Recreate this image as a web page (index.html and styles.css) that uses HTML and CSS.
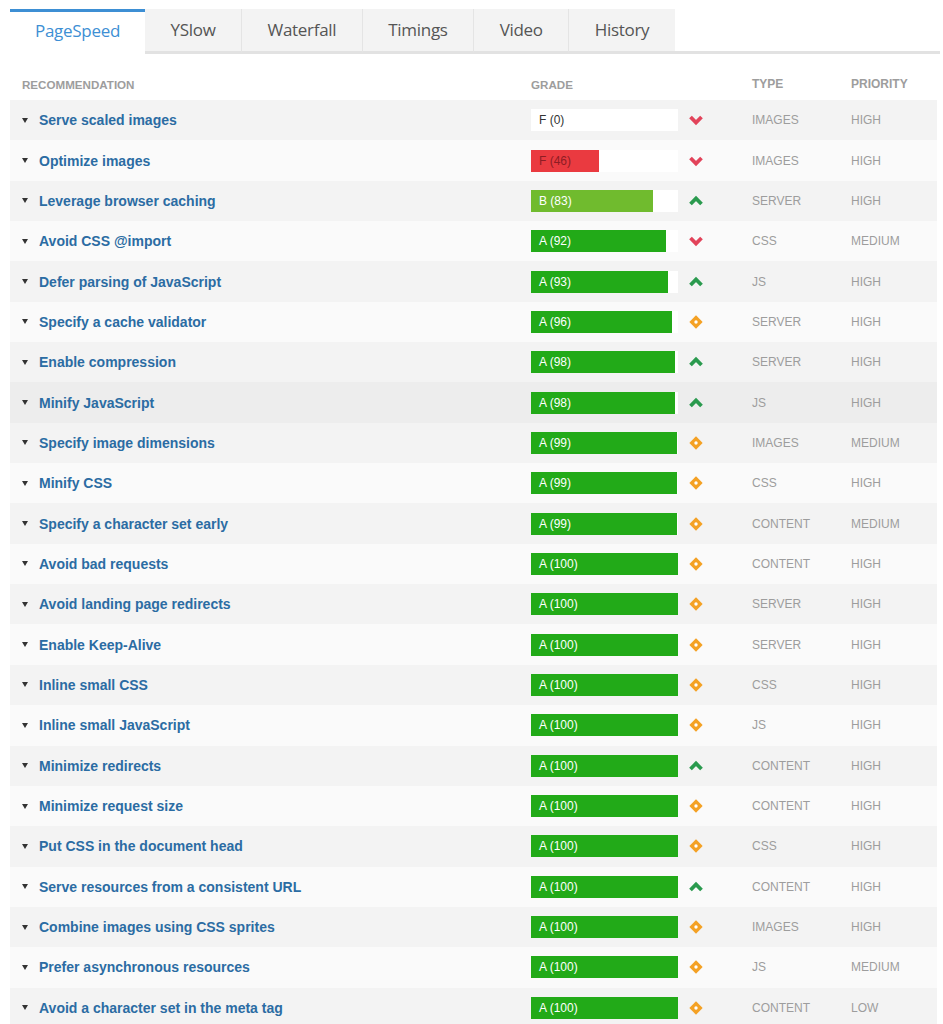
FILE: index.html
```html
<!DOCTYPE html>
<html lang="en">
  <head>
    <meta charset="UTF-8" />
    <title>Performance Report - PageSpeed</title>
    <link rel="stylesheet" href="styles.css">
  </head>
  <body>
    <div class="report">
      <ul class="tabs">
        <li class="tab active">PageSpeed</li>
        <li class="tab">YSlow</li>
        <li class="tab">Waterfall</li>
        <li class="tab">Timings</li>
        <li class="tab">Video</li>
        <li class="tab">History</li>
        <li class="tab-fill"></li>
      </ul>

      <div class="grid">
        <div class="row head">
          <div class="col-rec">Recommendation</div>
          <div class="col-grade">Grade</div>
          <div class="col-trend"></div>
          <div class="col-type">Type</div>
          <div class="col-prio">Priority</div>
        </div>

        <div class="row">
          <div class="col-rec"><span class="caret"></span><a href="#">Serve scaled images</a></div>
          <div class="col-grade"><div class="bar"><div class="fill fill-f" style="width: 0%"></div><span class="label dark">F (0)</span></div></div>
          <div class="col-trend"><svg class="ico" viewBox="0 0 16 14"><polyline class="down" points="2.5,4 8,9.5 13.5,4"/></svg></div>
          <div class="col-type">Images</div>
          <div class="col-prio">High</div>
        </div>
        <div class="row">
          <div class="col-rec"><span class="caret"></span><a href="#">Optimize images</a></div>
          <div class="col-grade"><div class="bar"><div class="fill fill-f" style="width: 46%"></div><span class="label red">F (46)</span></div></div>
          <div class="col-trend"><svg class="ico" viewBox="0 0 16 14"><polyline class="down" points="2.5,4 8,9.5 13.5,4"/></svg></div>
          <div class="col-type">Images</div>
          <div class="col-prio">High</div>
        </div>
        <div class="row">
          <div class="col-rec"><span class="caret"></span><a href="#">Leverage browser caching</a></div>
          <div class="col-grade"><div class="bar"><div class="fill fill-b" style="width: 83%"></div><span class="label">B (83)</span></div></div>
          <div class="col-trend"><svg class="ico" viewBox="0 0 16 14"><polyline class="up" points="2.5,10 8,4.5 13.5,10"/></svg></div>
          <div class="col-type">Server</div>
          <div class="col-prio">High</div>
        </div>
        <div class="row">
          <div class="col-rec"><span class="caret"></span><a href="#">Avoid CSS @import</a></div>
          <div class="col-grade"><div class="bar"><div class="fill" style="width: 92%"></div><span class="label">A (92)</span></div></div>
          <div class="col-trend"><svg class="ico" viewBox="0 0 16 14"><polyline class="down" points="2.5,4 8,9.5 13.5,4"/></svg></div>
          <div class="col-type">CSS</div>
          <div class="col-prio">Medium</div>
        </div>
        <div class="row">
          <div class="col-rec"><span class="caret"></span><a href="#">Defer parsing of JavaScript</a></div>
          <div class="col-grade"><div class="bar"><div class="fill" style="width: 93%"></div><span class="label">A (93)</span></div></div>
          <div class="col-trend"><svg class="ico" viewBox="0 0 16 14"><polyline class="up" points="2.5,10 8,4.5 13.5,10"/></svg></div>
          <div class="col-type">JS</div>
          <div class="col-prio">High</div>
        </div>
        <div class="row">
          <div class="col-rec"><span class="caret"></span><a href="#">Specify a cache validator</a></div>
          <div class="col-grade"><div class="bar"><div class="fill" style="width: 96%"></div><span class="label">A (96)</span></div></div>
          <div class="col-trend"><svg class="ico" viewBox="0 0 16 14"><rect class="same" x="3.3" y="2.3" width="9.4" height="9.4" transform="rotate(45 8 7)"/><circle cx="8" cy="7" r="1.7" fill="#fff"/></svg></div>
          <div class="col-type">Server</div>
          <div class="col-prio">High</div>
        </div>
        <div class="row">
          <div class="col-rec"><span class="caret"></span><a href="#">Enable compression</a></div>
          <div class="col-grade"><div class="bar"><div class="fill" style="width: 98%"></div><span class="label">A (98)</span></div></div>
          <div class="col-trend"><svg class="ico" viewBox="0 0 16 14"><polyline class="up" points="2.5,10 8,4.5 13.5,10"/></svg></div>
          <div class="col-type">Server</div>
          <div class="col-prio">High</div>
        </div>
        <div class="row hover">
          <div class="col-rec"><span class="caret"></span><a href="#">Minify JavaScript</a></div>
          <div class="col-grade"><div class="bar"><div class="fill" style="width: 98%"></div><span class="label">A (98)</span></div></div>
          <div class="col-trend"><svg class="ico" viewBox="0 0 16 14"><polyline class="up" points="2.5,10 8,4.5 13.5,10"/></svg></div>
          <div class="col-type">JS</div>
          <div class="col-prio">High</div>
        </div>
        <div class="row">
          <div class="col-rec"><span class="caret"></span><a href="#">Specify image dimensions</a></div>
          <div class="col-grade"><div class="bar"><div class="fill" style="width: 99%"></div><span class="label">A (99)</span></div></div>
          <div class="col-trend"><svg class="ico" viewBox="0 0 16 14"><rect class="same" x="3.3" y="2.3" width="9.4" height="9.4" transform="rotate(45 8 7)"/><circle cx="8" cy="7" r="1.7" fill="#fff"/></svg></div>
          <div class="col-type">Images</div>
          <div class="col-prio">Medium</div>
        </div>
        <div class="row">
          <div class="col-rec"><span class="caret"></span><a href="#">Minify CSS</a></div>
          <div class="col-grade"><div class="bar"><div class="fill" style="width: 99%"></div><span class="label">A (99)</span></div></div>
          <div class="col-trend"><svg class="ico" viewBox="0 0 16 14"><rect class="same" x="3.3" y="2.3" width="9.4" height="9.4" transform="rotate(45 8 7)"/><circle cx="8" cy="7" r="1.7" fill="#fff"/></svg></div>
          <div class="col-type">CSS</div>
          <div class="col-prio">High</div>
        </div>
        <div class="row">
          <div class="col-rec"><span class="caret"></span><a href="#">Specify a character set early</a></div>
          <div class="col-grade"><div class="bar"><div class="fill" style="width: 99%"></div><span class="label">A (99)</span></div></div>
          <div class="col-trend"><svg class="ico" viewBox="0 0 16 14"><rect class="same" x="3.3" y="2.3" width="9.4" height="9.4" transform="rotate(45 8 7)"/><circle cx="8" cy="7" r="1.7" fill="#fff"/></svg></div>
          <div class="col-type">Content</div>
          <div class="col-prio">Medium</div>
        </div>
        <div class="row">
          <div class="col-rec"><span class="caret"></span><a href="#">Avoid bad requests</a></div>
          <div class="col-grade"><div class="bar"><div class="fill" style="width: 100%"></div><span class="label">A (100)</span></div></div>
          <div class="col-trend"><svg class="ico" viewBox="0 0 16 14"><rect class="same" x="3.3" y="2.3" width="9.4" height="9.4" transform="rotate(45 8 7)"/><circle cx="8" cy="7" r="1.7" fill="#fff"/></svg></div>
          <div class="col-type">Content</div>
          <div class="col-prio">High</div>
        </div>
        <div class="row">
          <div class="col-rec"><span class="caret"></span><a href="#">Avoid landing page redirects</a></div>
          <div class="col-grade"><div class="bar"><div class="fill" style="width: 100%"></div><span class="label">A (100)</span></div></div>
          <div class="col-trend"><svg class="ico" viewBox="0 0 16 14"><rect class="same" x="3.3" y="2.3" width="9.4" height="9.4" transform="rotate(45 8 7)"/><circle cx="8" cy="7" r="1.7" fill="#fff"/></svg></div>
          <div class="col-type">Server</div>
          <div class="col-prio">High</div>
        </div>
        <div class="row">
          <div class="col-rec"><span class="caret"></span><a href="#">Enable Keep-Alive</a></div>
          <div class="col-grade"><div class="bar"><div class="fill" style="width: 100%"></div><span class="label">A (100)</span></div></div>
          <div class="col-trend"><svg class="ico" viewBox="0 0 16 14"><rect class="same" x="3.3" y="2.3" width="9.4" height="9.4" transform="rotate(45 8 7)"/><circle cx="8" cy="7" r="1.7" fill="#fff"/></svg></div>
          <div class="col-type">Server</div>
          <div class="col-prio">High</div>
        </div>
        <div class="row">
          <div class="col-rec"><span class="caret"></span><a href="#">Inline small CSS</a></div>
          <div class="col-grade"><div class="bar"><div class="fill" style="width: 100%"></div><span class="label">A (100)</span></div></div>
          <div class="col-trend"><svg class="ico" viewBox="0 0 16 14"><rect class="same" x="3.3" y="2.3" width="9.4" height="9.4" transform="rotate(45 8 7)"/><circle cx="8" cy="7" r="1.7" fill="#fff"/></svg></div>
          <div class="col-type">CSS</div>
          <div class="col-prio">High</div>
        </div>
        <div class="row">
          <div class="col-rec"><span class="caret"></span><a href="#">Inline small JavaScript</a></div>
          <div class="col-grade"><div class="bar"><div class="fill" style="width: 100%"></div><span class="label">A (100)</span></div></div>
          <div class="col-trend"><svg class="ico" viewBox="0 0 16 14"><rect class="same" x="3.3" y="2.3" width="9.4" height="9.4" transform="rotate(45 8 7)"/><circle cx="8" cy="7" r="1.7" fill="#fff"/></svg></div>
          <div class="col-type">JS</div>
          <div class="col-prio">High</div>
        </div>
        <div class="row">
          <div class="col-rec"><span class="caret"></span><a href="#">Minimize redirects</a></div>
          <div class="col-grade"><div class="bar"><div class="fill" style="width: 100%"></div><span class="label">A (100)</span></div></div>
          <div class="col-trend"><svg class="ico" viewBox="0 0 16 14"><polyline class="up" points="2.5,10 8,4.5 13.5,10"/></svg></div>
          <div class="col-type">Content</div>
          <div class="col-prio">High</div>
        </div>
        <div class="row">
          <div class="col-rec"><span class="caret"></span><a href="#">Minimize request size</a></div>
          <div class="col-grade"><div class="bar"><div class="fill" style="width: 100%"></div><span class="label">A (100)</span></div></div>
          <div class="col-trend"><svg class="ico" viewBox="0 0 16 14"><rect class="same" x="3.3" y="2.3" width="9.4" height="9.4" transform="rotate(45 8 7)"/><circle cx="8" cy="7" r="1.7" fill="#fff"/></svg></div>
          <div class="col-type">Content</div>
          <div class="col-prio">High</div>
        </div>
        <div class="row">
          <div class="col-rec"><span class="caret"></span><a href="#">Put CSS in the document head</a></div>
          <div class="col-grade"><div class="bar"><div class="fill" style="width: 100%"></div><span class="label">A (100)</span></div></div>
          <div class="col-trend"><svg class="ico" viewBox="0 0 16 14"><rect class="same" x="3.3" y="2.3" width="9.4" height="9.4" transform="rotate(45 8 7)"/><circle cx="8" cy="7" r="1.7" fill="#fff"/></svg></div>
          <div class="col-type">CSS</div>
          <div class="col-prio">High</div>
        </div>
        <div class="row">
          <div class="col-rec"><span class="caret"></span><a href="#">Serve resources from a consistent URL</a></div>
          <div class="col-grade"><div class="bar"><div class="fill" style="width: 100%"></div><span class="label">A (100)</span></div></div>
          <div class="col-trend"><svg class="ico" viewBox="0 0 16 14"><polyline class="up" points="2.5,10 8,4.5 13.5,10"/></svg></div>
          <div class="col-type">Content</div>
          <div class="col-prio">High</div>
        </div>
        <div class="row">
          <div class="col-rec"><span class="caret"></span><a href="#">Combine images using CSS sprites</a></div>
          <div class="col-grade"><div class="bar"><div class="fill" style="width: 100%"></div><span class="label">A (100)</span></div></div>
          <div class="col-trend"><svg class="ico" viewBox="0 0 16 14"><rect class="same" x="3.3" y="2.3" width="9.4" height="9.4" transform="rotate(45 8 7)"/><circle cx="8" cy="7" r="1.7" fill="#fff"/></svg></div>
          <div class="col-type">Images</div>
          <div class="col-prio">High</div>
        </div>
        <div class="row">
          <div class="col-rec"><span class="caret"></span><a href="#">Prefer asynchronous resources</a></div>
          <div class="col-grade"><div class="bar"><div class="fill" style="width: 100%"></div><span class="label">A (100)</span></div></div>
          <div class="col-trend"><svg class="ico" viewBox="0 0 16 14"><rect class="same" x="3.3" y="2.3" width="9.4" height="9.4" transform="rotate(45 8 7)"/><circle cx="8" cy="7" r="1.7" fill="#fff"/></svg></div>
          <div class="col-type">JS</div>
          <div class="col-prio">Medium</div>
        </div>
        <div class="row">
          <div class="col-rec"><span class="caret"></span><a href="#">Avoid a character set in the meta tag</a></div>
          <div class="col-grade"><div class="bar"><div class="fill" style="width: 100%"></div><span class="label">A (100)</span></div></div>
          <div class="col-trend"><svg class="ico" viewBox="0 0 16 14"><rect class="same" x="3.3" y="2.3" width="9.4" height="9.4" transform="rotate(45 8 7)"/><circle cx="8" cy="7" r="1.7" fill="#fff"/></svg></div>
          <div class="col-type">Content</div>
          <div class="col-prio">Low</div>
        </div>
      </div>
    </div>
  </body>
</html>
```

FILE: styles.css
```css
body {
  margin: 0;
  background: #fff;
  font-family: "Liberation Sans", Arial, sans-serif;
}
.report {
  padding: 9px 3px 0 10px;
}

/* Tabs */
.tabs {
  display: flex;
  list-style: none;
  margin: 0;
  padding: 0;
  height: 45px;
}
.tab {
  font-family: "Open Sans", sans-serif;
  font-size: 17px;
  color: #555;
  background: #f3f3f3;
  border-left: 1px solid #e4e4e4;
  border-bottom: 3px solid #e2e2e2;
  height: 42px;
  line-height: 41px;
  padding: 0 25.5px;
  letter-spacing: -0.3px;
}
.tab.active {
  color: #3d8fd4;
  background: #fff;
  border-left: none;
  border-top: 3px solid #3d8fd4;
  border-bottom: none;
  line-height: 37px;
  padding: 0;
  width: 135px;
  text-align: center;
}
.tab.active + .tab {
  border-left: none;
}
.tab-fill {
  flex: 1;
  border-bottom: 3px solid #e2e2e2;
  height: 42px;
}

/* Grid */
.grid {
  width: 927px;
}
.row {
  display: grid;
  grid-template-columns: 521px 147px 74px 99px 86px;
  align-items: center;
  height: 40.35px;
  background: #fafafa;
}
.row:nth-child(even) {
  background: #f3f3f3;
}
.row.hover {
  background: #ededed;
}
.row.head {
  background: #fff;
  height: 46px;
  align-items: end;
  font-size: 11.6px;
  font-weight: bold;
  color: #9d9d9d;
  text-transform: uppercase;
}
.row.head > div {
  padding-bottom: 9px;
}
.row.head .col-rec {
  padding-left: 12px;
}

.col-rec {
  display: flex;
  align-items: center;
  padding-left: 12px;
}
.caret {
  width: 0;
  height: 0;
  border-left: 3.5px solid transparent;
  border-right: 3.5px solid transparent;
  border-top: 5px solid #333;
  margin-right: 11px;
}
.col-rec a {
  color: #2b6ca3;
  font-weight: bold;
  font-size: 14px;
  text-decoration: none;
}

.bar {
  position: relative;
  height: 22px;
  background: #fff;
}
.fill {
  height: 100%;
  background: #22aa18;
}
.fill-b {
  background: #70bb2e;
}
.fill-f {
  background: #ea3a40;
}
.label {
  position: absolute;
  left: 8px;
  top: 0;
  line-height: 22px;
  font-size: 12px;
  color: #fff;
}
.label.dark {
  color: #333;
}
.label.red {
  color: #8e1d24;
}

.col-trend {
  padding-left: 10px;
  display: flex;
  align-items: center;
}
.ico {
  width: 16px;
  height: 14px;
}
.ico .down {
  fill: none;
  stroke: #e2435a;
  stroke-width: 3.8;
}
.ico .up {
  fill: none;
  stroke: #2a9a4e;
  stroke-width: 3.8;
}
.ico .same {
  fill: #f4a124;
}

.col-type,
.col-prio {
  font-size: 12px;
  color: #9d9d9d;
  text-transform: uppercase;
}
```
